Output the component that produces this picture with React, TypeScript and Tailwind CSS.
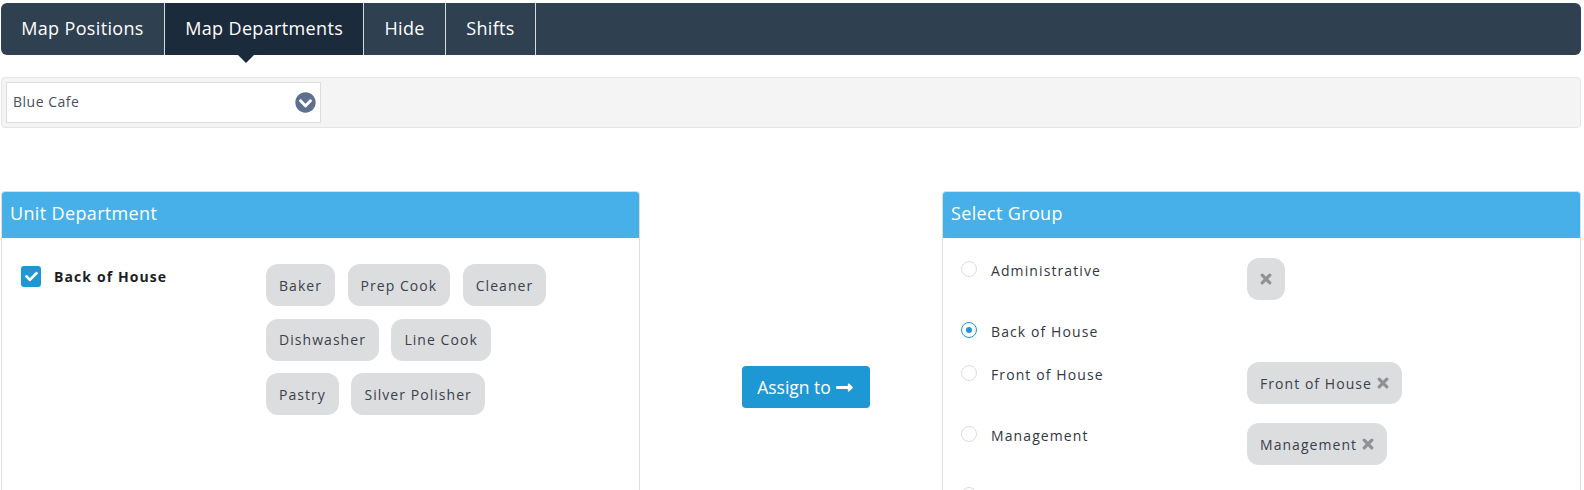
import { FaCheck, FaChevronCircleDown, FaLongArrowAltRight } from "react-icons/fa";

const Chip = ({ label, close }: { label?: string; close?: boolean }) => (
  <span className="inline-flex h-[42px] items-center gap-[5px] rounded-[12px] bg-[#dcdddf] px-[13px] text-[14px] tracking-[1.05px] text-[#3a3f4a]">
    {label}
    {close && (
      <svg viewBox="0 0 12 12" className="h-[12px] w-[12px]">
        <path d="M2.2 2.2 9.8 9.8M9.8 2.2 2.2 9.8" stroke="#8f9194" strokeWidth="3.2" strokeLinecap="round" fill="none" />
      </svg>
    )}
  </span>
);

const Radio = ({ label, on, chip, h }: { label: string; on?: boolean; chip?: string | boolean; h: string }) => (
  <div className={`flex ${h}`}>
    <div className="flex w-[304px] items-start pt-[2px]">
      <span className={`mt-[1px] ml-[18px] flex h-[16px] w-[16px] items-center justify-center rounded-full border ${on ? "border-[#1e97d5]" : "border-[#dcdcdc]"}`}>
        {on && <span className="h-[6px] w-[6px] rounded-full bg-[#1e97d5]" />}
      </span>
      <span className="mt-[1px] ml-[14px] text-[14px] leading-[20px] tracking-[1.1px] text-[#33373f]">{label}</span>
    </div>
    {chip && <Chip label={typeof chip === "string" ? chip : undefined} close />}
  </div>
);

const Panel = ({ title, children }: { title: string; children: React.ReactNode }) => (
  <div className="h-[320px] overflow-hidden rounded-t-[4px] border border-b-0 border-[#dddddd]">
    <div className="flex h-[46px] items-center bg-[#48b0e8] pb-[3px] pl-[8px] text-[18px] tracking-[0.35px] text-white">{title}</div>
    {children}
  </div>
);

export default function App() {
  const tabs = ["Map Positions", "Map Departments", "Hide", "Shifts"];
  return (
    <div className="h-[490px] w-[1584px] overflow-hidden bg-white pt-[3px] pr-[3px] pl-[1px] font-['Open_Sans',sans-serif]">
      <nav className="flex h-[52px] rounded-[6px] bg-[#2f4051]">
        {tabs.map((t) => (
          <div key={t} className={`relative flex items-center border-r border-[#d8dadc] px-[20.2px] pb-[2px] text-[18px] tracking-[0.35px] text-white ${t === "Map Departments" ? "bg-[#1c2b3b]" : ""} ${t === "Map Positions" ? "rounded-l-[6px]" : ""}`}>
            {t}
            {t === "Map Departments" && (
              <span className="absolute top-full left-[73px] h-0 w-0 border-x-[8px] border-t-[8px] border-x-transparent border-t-[#1c2b3b]" />
            )}
          </div>
        ))}
      </nav>
      <div className="mt-[22px] flex h-[51px] items-center rounded-[4px] border border-[#e6e6e6] bg-[#f4f4f4] pl-[4px]">
        <div className="flex h-[41px] w-[315px] items-center justify-between border border-[#dddddd] bg-white pr-[4px] pl-[6px] text-[14px] tracking-[0.5px] text-[#4a4f5c]">
          <span className="pb-[2px]">Blue Cafe</span>
          <FaChevronCircleDown className="text-[21px] text-[#5f6f90]" />
        </div>
      </div>
      <div className="mt-[63px] grid grid-cols-[639px_1fr_639px]">
        <Panel title="Unit Department">
          <div className="flex pt-[26px] pl-[19px]">
            <div className="flex w-[245px] items-start">
              <span className="mt-[2px] flex h-[21px] w-[20px] items-center justify-center rounded-[3px] bg-[#1e97d5]">
                <FaCheck className="text-[13px] text-white" />
              </span>
              <span className="mt-[3px] ml-[13px] text-[14px] leading-[20px] font-bold tracking-[1.1px] text-[#1d1d1f]">Back of House</span>
            </div>
            <div className="flex w-[290px] flex-wrap gap-x-[12.5px] gap-y-[12.5px]">
              {["Baker", "Prep Cook", "Cleaner", "Dishwasher", "Line Cook", "Pastry", "Silver Polisher"].map((c) => (
                <Chip key={c} label={c} />
              ))}
            </div>
          </div>
        </Panel>
        <div className="flex justify-center pt-[175px] pl-[29px]">
          <button className="flex h-[42px] w-[128px] items-center justify-center gap-[4px] rounded-[4px] bg-[#1e97d5] text-[17.5px] text-white">
            Assign to
            <FaLongArrowAltRight className="text-[19px]" />
          </button>
        </div>
        <Panel title="Select Group">
          <div className="pt-[20px]">
            <Radio label="Administrative" chip h="h-[61px]" />
            <Radio label="Back of House" on h="h-[43px]" />
            <Radio label="Front of House" chip="Front of House" h="h-[61px]" />
            <Radio label="Management" chip="Management" h="h-[61px]" />
            <Radio label="Sales" h="h-[43px]" />
          </div>
        </Panel>
      </div>
    </div>
  );
}
